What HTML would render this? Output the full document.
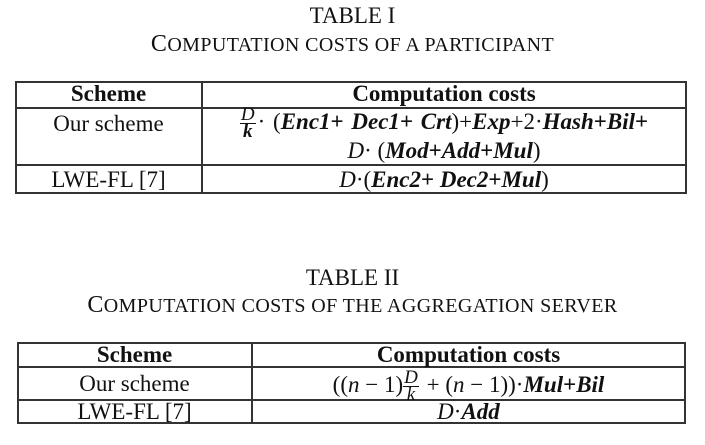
<!DOCTYPE html>
<html><head><meta charset="utf-8"><style>
body{margin:0;width:705px;height:445px;background:#fff;font-family:"Liberation Serif",serif;color:#111;position:relative;overflow:hidden}
.t{position:absolute;left:0;width:705px;text-align:center;font-size:23px;line-height:24px}
.cap{font-size:24px;letter-spacing:0.4px}
.cap small{font-size:20px}
.ln{position:absolute;background:#333}
.c{position:absolute;text-align:center;font-size:23px;line-height:24px;white-space:nowrap}
b i, i b{font-weight:bold;font-style:italic}
.frac{display:inline-block;vertical-align:middle;text-align:center;font-size:19px;line-height:16px;font-style:italic;margin-right:2px}
.frac span{display:block}
.frac .n{border-bottom:1px solid #111;padding:0 1px}
</style></head><body>
<div class="t" style="top:4px">TABLE I</div>
<div class="t cap" style="top:32px">C<small>OMPUTATION COSTS OF A PARTICIPANT</small></div>
<div class="ln" style="left:15px;top:81px;width:672px;height:2px"></div>
<div class="ln" style="left:15px;top:107px;width:672px;height:2px"></div>
<div class="ln" style="left:15px;top:164px;width:672px;height:2px"></div>
<div class="ln" style="left:15px;top:192px;width:672px;height:2px"></div>
<div class="ln" style="left:15px;top:81px;width:2px;height:113px"></div>
<div class="ln" style="left:201px;top:81px;width:2px;height:113px"></div>
<div class="ln" style="left:685px;top:81px;width:2px;height:113px"></div>
<div class="c" style="left:15px;width:187px;top:82px"><b>Scheme</b></div>
<div class="c" style="left:202px;width:484px;top:82px"><b>Computation costs</b></div>
<div class="c" style="left:15px;width:187px;top:112px">Our scheme</div>
<div class="c" style="left:202px;width:484px;top:107px;word-spacing:2px"><span class="frac"><span class="n">D</span><span><b>k</b></span></span>&middot; (<b><i>Enc1</i>+ <i>Dec1</i>+ <i>Crt</i></b>)+<b><i>Exp</i></b>+2&middot;<b><i>Hash</i>+<i>Bil</i>+</b></div>
<div class="c" style="left:202px;width:484px;top:139px"><i>D</i>&middot; (<b><i>Mod</i>+<i>Add</i>+<i>Mul</i></b>)</div>
<div class="c" style="left:15px;width:187px;top:168px">LWE-FL [7]</div>
<div class="c" style="left:202px;width:484px;top:168px"><i>D</i>&middot;(<b><i>Enc2</i>+ <i>Dec2</i>+<i>Mul</i></b>)</div>

<div class="t" style="top:266px">TABLE II</div>
<div class="t cap" style="top:293px">C<small>OMPUTATION COSTS OF THE AGGREGATION SERVER</small></div>
<div class="ln" style="left:17px;top:342px;width:669px;height:2px"></div>
<div class="ln" style="left:17px;top:366px;width:669px;height:2px"></div>
<div class="ln" style="left:17px;top:399px;width:669px;height:2px"></div>
<div class="ln" style="left:17px;top:422px;width:669px;height:2px"></div>
<div class="ln" style="left:17px;top:342px;width:2px;height:82px"></div>
<div class="ln" style="left:251px;top:342px;width:2px;height:82px"></div>
<div class="ln" style="left:684px;top:342px;width:2px;height:82px"></div>
<div class="c" style="left:17px;width:235px;top:343px"><b>Scheme</b></div>
<div class="c" style="left:252px;width:433px;top:343px"><b>Computation costs</b></div>
<div class="c" style="left:17px;width:235px;top:372px">Our scheme</div>
<div class="c" style="left:252px;width:433px;top:370px">((<i>n</i> &minus; 1)<span class="frac"><span class="n">D</span><span>k</span></span> + (<i>n</i> &minus; 1))&middot;<b><i>Mul</i>+<i>Bil</i></b></div>
<div class="c" style="left:17px;width:235px;top:400px">LWE-FL [7]</div>
<div class="c" style="left:252px;width:433px;top:400px"><i>D</i>&middot;<b><i>Add</i></b></div>
</body></html>
